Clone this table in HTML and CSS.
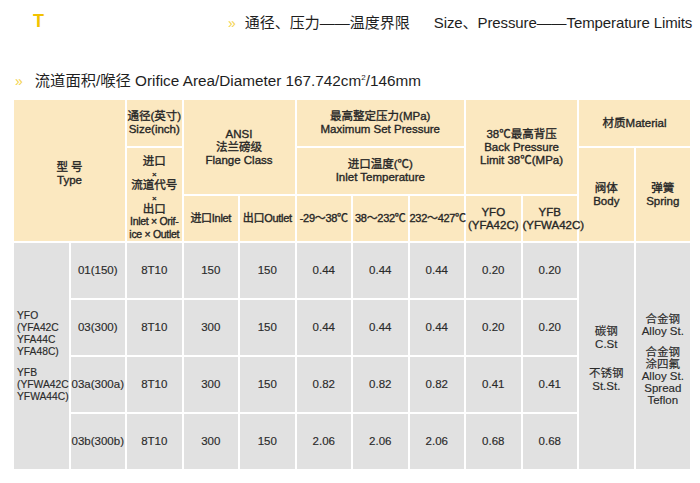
FILE: index.html
```html
<!DOCTYPE html>
<html lang="zh">
<head>
<meta charset="utf-8">
<link rel="stylesheet" href="styles.css">
</head>
<body>
<header class="top">
  <span class="logo">T</span>
  <h1 class="main-title"><span class="chev">»</span>通径、压力——温度界限<span class="en">Size、Pressure——Temperature Limits</span></h1>
</header>
<h2 class="sub-title"><span class="chev">»</span>流道面积/喉径 Orifice Area/Diameter 167.742cm<sup>2</sup>/146mm</h2>
<table class="spec">
  <colgroup>
    <col><col><col><col><col><col><col><col><col><col><col><col>
  </colgroup>
  <thead>
    <tr class="h1">
      <th colspan="2" rowspan="3" class="type">型 号<br>Type</th>
      <th>通径(英寸)<br>Size(inch)</th>
      <th colspan="2" rowspan="2">ANSI<br>法兰磅级<br>Flange Class</th>
      <th colspan="3">最高整定压力(MPa)<br>Maximum Set Pressure</th>
      <th colspan="2" rowspan="2">38℃最高背压<br>Back Pressure<br>Limit 38℃(MPa)</th>
      <th colspan="2">材质Material</th>
    </tr>
    <tr class="h2">
      <th rowspan="2" class="code">进口<br><small>×</small><br>流道代号<br><small>×</small><br>出口<br><span class="narrow">Inlet × Orif-<br>ice × Outlet</span></th>
      <th colspan="3">进口温度(℃)<br>Inlet Temperature</th>
      <th rowspan="2" class="mat">阀体<br>Body</th>
      <th rowspan="2" class="mat">弹簧<br>Spring</th>
    </tr>
    <tr class="h3">
      <th class="tight">进口Inlet</th>
      <th class="tight">出口Outlet</th>
      <th class="tight">-29～38℃</th>
      <th class="tight">38～232℃</th>
      <th class="tight">232～427℃</th>
      <th>YFO<br>(YFA42C)</th>
      <th>YFB<br>(YFWA42C)</th>
    </tr>
  </thead>
  <tbody>
    <tr>
      <td rowspan="4" class="model">YFO<br>(YFA42C<br>YFA44C<br>YFA48C)<br><span class="gap"></span>YFB<br>(YFWA42C<br>YFWA44C)</td>
      <td>01(150)</td><td>8T10</td><td>150</td><td>150</td>
      <td>0.44</td><td>0.44</td><td>0.44</td><td>0.20</td><td>0.20</td>
      <td rowspan="4" class="matcell body-mat">碳钢<br>C.St<br><span class="gap-lg"></span>不锈钢<br>St.St.</td>
      <td rowspan="4" class="matcell spring-mat">合金钢<br>Alloy St.<br><span class="gap"></span>合金钢<br>涂四氟<br>Alloy St.<br>Spread<br>Teflon</td>
    </tr>
    <tr>
      <td>03(300)</td><td>8T10</td><td>300</td><td>150</td>
      <td>0.44</td><td>0.44</td><td>0.44</td><td>0.20</td><td>0.20</td>
    </tr>
    <tr>
      <td>03a(300a)</td><td>8T10</td><td>300</td><td>150</td>
      <td>0.82</td><td>0.82</td><td>0.82</td><td>0.41</td><td>0.41</td>
    </tr>
    <tr>
      <td>03b(300b)</td><td>8T10</td><td>300</td><td>150</td>
      <td>2.06</td><td>2.06</td><td>2.06</td><td>0.68</td><td>0.68</td>
    </tr>
  </tbody>
</table>
</body>
</html>
```
FILE: styles.css
```css
html, body {
  margin: 0;
  padding: 0;
  background: #ffffff;
}
body {
  font-family: "Liberation Sans", Arial, "Noto Sans CJK SC", sans-serif;
  color: #222;
}
.top {
  display: flex;
  align-items: center;
  height: 42px;
  padding-left: 33px;
}
.logo {
  color: #f2c200;
  font-weight: bold;
  font-size: 18px;
  width: 195px;
}
.main-title {
  margin: 0;
  font-size: 15px;
  font-weight: normal;
  color: #1e1e1e;
  white-space: nowrap;
}
.chev {
  color: #f3d24a;
  font-size: 14px;
  margin-right: 9px;
}
.main-title .en {
  margin-left: 24px;
  letter-spacing: -0.1px;
}
.sub-title {
  margin: 26px 0 0 15px;
  font-size: 15.3px;
  font-weight: normal;
  color: #1e1e1e;
  height: 30px;
  white-space: nowrap;
}
.sub-title .chev {
  margin-right: 12px;
  font-size: 14px;
}
.sub-title sup {
  font-size: 8px;
  vertical-align: 6px;
  line-height: 0;
}
.spec {
  margin-left: 12px;
  width: 678px;
  table-layout: fixed;
  border-collapse: collapse;
  font-size: 11.5px;
  line-height: 13px;
}
.spec col {
  width: 56.5px;
}
.spec th, .spec td {
  border: 2px solid #fff;
  padding: 0;
  text-align: center;
  vertical-align: middle;
}
.spec th {
  background: #fbe8c0;
  font-weight: normal;
  color: #262626;
  -webkit-text-stroke: 0.35px #262626;
}
.spec td {
  background: #e1e1e1;
  color: #2a2a2a;
  -webkit-text-stroke: 0.15px #2a2a2a;
}
.h1 th { height: 46px; }
.h2 th { height: 46px; }
.h3 th { height: 45px; }
.spec tbody tr td { height: 55px; }
.spec th.type { padding-top: 6px; }
.spec th.code {
  line-height: 12px;
  padding-top: 6px;
}
.spec th.code small {
  font-size: 8px;
  line-height: 8px;
}
.narrow {
  font-size: 10.5px;
  letter-spacing: -0.3px;
  line-height: 13px;
}
.spec th.tight {
  font-size: 11px;
  letter-spacing: -0.3px;
  white-space: nowrap;
}
.spec th.mat {
  vertical-align: top;
  padding-top: 34px;
}
.spec td.model {
  text-align: left;
  padding-left: 3px;
  white-space: nowrap;
  font-size: 10.3px;
  line-height: 12px;
}
.gap {
  display: block;
  height: 9px;
}
.gap-lg {
  display: block;
  height: 16px;
}
.spec td.body-mat {
  line-height: 13px;
  padding-top: 6px;
}
.spec td.spring-mat {
  line-height: 12px;
  padding-top: 6px;
}
```
